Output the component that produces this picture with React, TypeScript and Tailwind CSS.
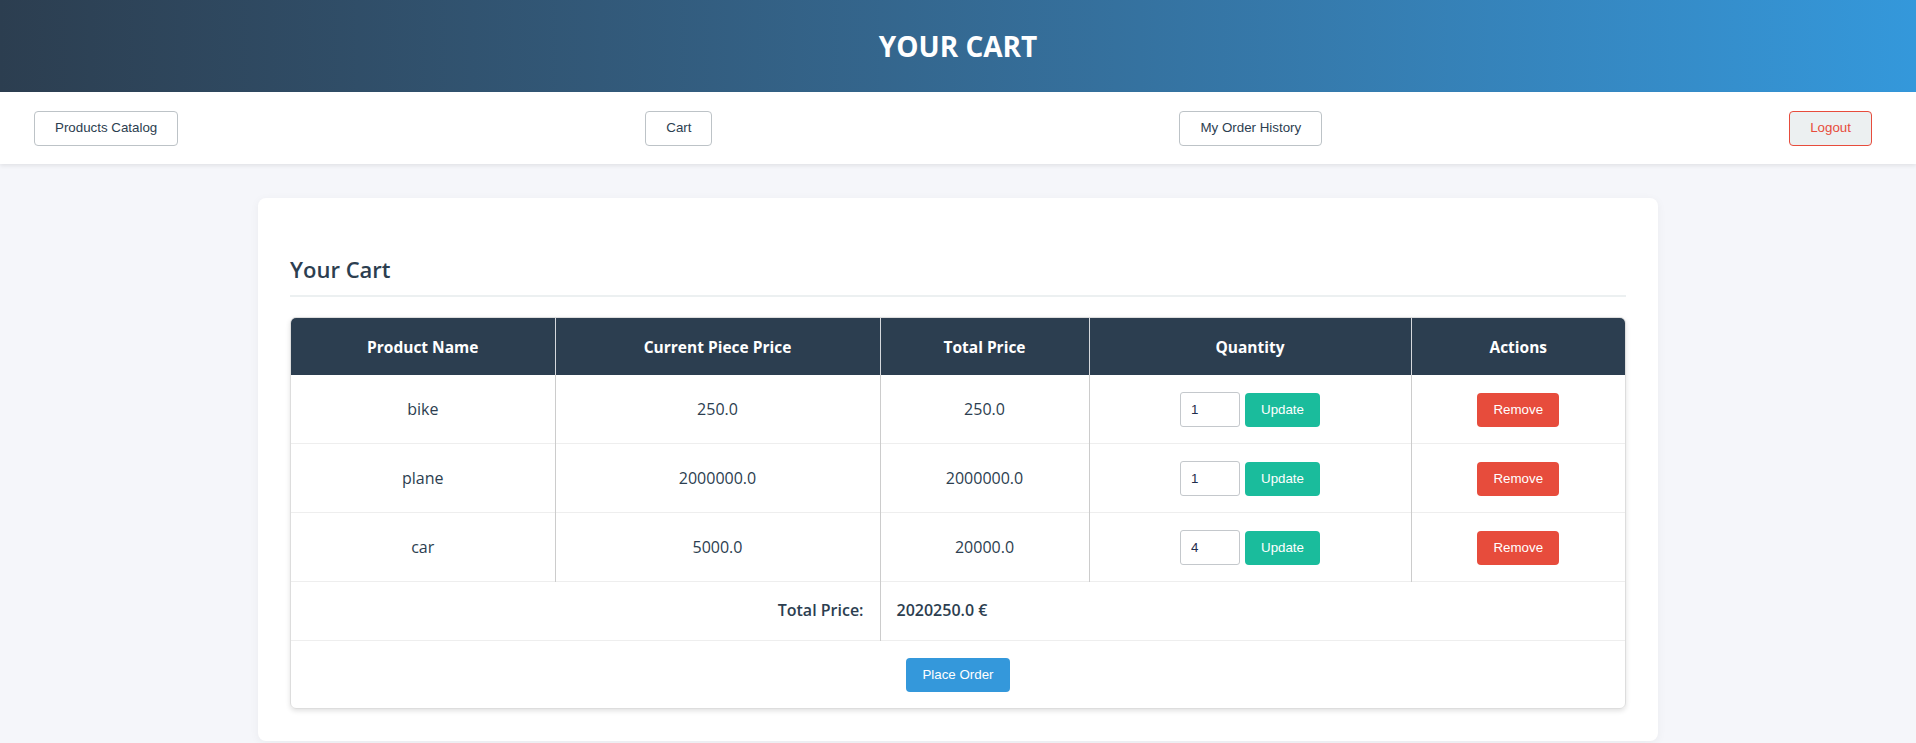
import React from "react";

const items = [
  { name: "bike", price: "250.0", total: "250.0", qty: 1 },
  { name: "plane", price: "2000000.0", total: "2000000.0", qty: 1 },
  { name: "car", price: "5000.0", total: "20000.0", qty: 4 },
];

const navBtn =
  "h-[35px] px-5 rounded border border-[#bdc3c7] bg-white text-[13.33px] text-[#2c3e50] font-['Liberation_Sans',Arial,sans-serif]";

const smallBtn =
  "h-[34px] px-4 rounded text-white text-[13.33px] font-['Liberation_Sans',Arial,sans-serif]";

export default function App() {
  return (
    <div className="min-h-screen bg-[#f5f6fa] font-['Open_Sans',sans-serif] text-[#2c3e50]">
      <header className="h-[92px] flex items-center justify-center bg-gradient-to-r from-[#2c3e50] to-[#3498db]">
        <h1 className="text-white text-[28px] font-bold">YOUR CART</h1>
      </header>

      <nav className="h-[72px] flex items-center justify-between pl-[34px] pr-[44px] bg-white shadow-[0_2px_4px_rgba(0,0,0,0.08)]">
        <button className={navBtn}>Products Catalog</button>
        <button className={navBtn}>Cart</button>
        <button className={navBtn}>My Order History</button>
        <button className="h-[35px] px-5 rounded border border-[#e74c3c] bg-[#ecf0f1] text-[13.33px] text-[#e74c3c] font-['Liberation_Sans',Arial,sans-serif]">
          Logout
        </button>
      </nav>

      <main className="max-w-[1400px] mx-auto mt-[34px] bg-white rounded-lg shadow-[0_2px_10px_rgba(0,0,0,0.05)] p-8">
        <h2 className="mt-[25px] pb-[11px] border-b-2 border-[#ecf0f1] text-[22px] font-semibold leading-[1.3]">
          Your Cart
        </h2>

        <div className="mt-5 rounded-md overflow-hidden shadow-[0_2px_5px_rgba(0,0,0,0.12)] border border-[#ddd]">
          <table className="w-full table-fixed border-collapse text-[16px] leading-[1.6]">
            <colgroup>
              <col className="w-[264px]" />
              <col className="w-[325px]" />
              <col className="w-[209px]" />
              <col className="w-[322px]" />
              <col />
            </colgroup>
            <thead>
              <tr className="bg-[#2c3e50] text-white text-[15.5px]">
                <th className="pt-[17px] pb-4 px-4 font-bold border-r border-[#d5d8dc]">Product Name</th>
                <th className="pt-[17px] pb-4 px-4 font-bold border-r border-[#d5d8dc]">Current Piece Price</th>
                <th className="pt-[17px] pb-4 px-4 font-bold border-r border-[#d5d8dc]">Total Price</th>
                <th className="pt-[17px] pb-4 px-4 font-bold border-r border-[#d5d8dc]">Quantity</th>
                <th className="pt-[17px] pb-4 px-4 font-bold">Actions</th>
              </tr>
            </thead>
            <tbody>
              {items.map((it) => (
                <tr key={it.name} className="border-b border-[#eee]">
                  <td className="pt-[17px] pb-4 px-4 text-center border-r border-[#ccc]">{it.name}</td>
                  <td className="pt-[17px] pb-4 px-4 text-center border-r border-[#ccc]">{it.price}</td>
                  <td className="pt-[17px] pb-4 px-4 text-center border-r border-[#ccc]">{it.total}</td>
                  <td className="pt-[17px] pb-4 px-4 text-center border-r border-[#ccc]">
                    <div className="flex items-center justify-center gap-[5px]">
                      <input
                        type="number"
                        defaultValue={it.qty}
                        className="w-[60px] h-[35px] pl-[10px] rounded-[3px] border border-[#c4c8cc] text-[13.33px] text-[#1f2d4d] font-['Liberation_Sans',Arial,sans-serif] outline-none"
                      />
                      <button className={smallBtn + " bg-[#1abc9c]"}>Update</button>
                    </div>
                  </td>
                  <td className="pt-[17px] pb-4 px-4 text-center">
                    <button className={smallBtn + " bg-[#e74c3c]"}>Remove</button>
                  </td>
                </tr>
              ))}
              <tr className="border-b border-[#eee]">
                <td colSpan={2} className="p-4 text-right font-semibold border-r border-[#ccc]">
                  Total Price:
                </td>
                <td colSpan={3} className="p-4 text-left font-semibold">
                  2020250.0 €
                </td>
              </tr>
              <tr>
                <td colSpan={5} className="pt-[17px] pb-4 px-4 text-center">
                  <button className={smallBtn + " bg-[#3498db]"}>Place Order</button>
                </td>
              </tr>
            </tbody>
          </table>
        </div>
      </main>
    </div>
  );
}
